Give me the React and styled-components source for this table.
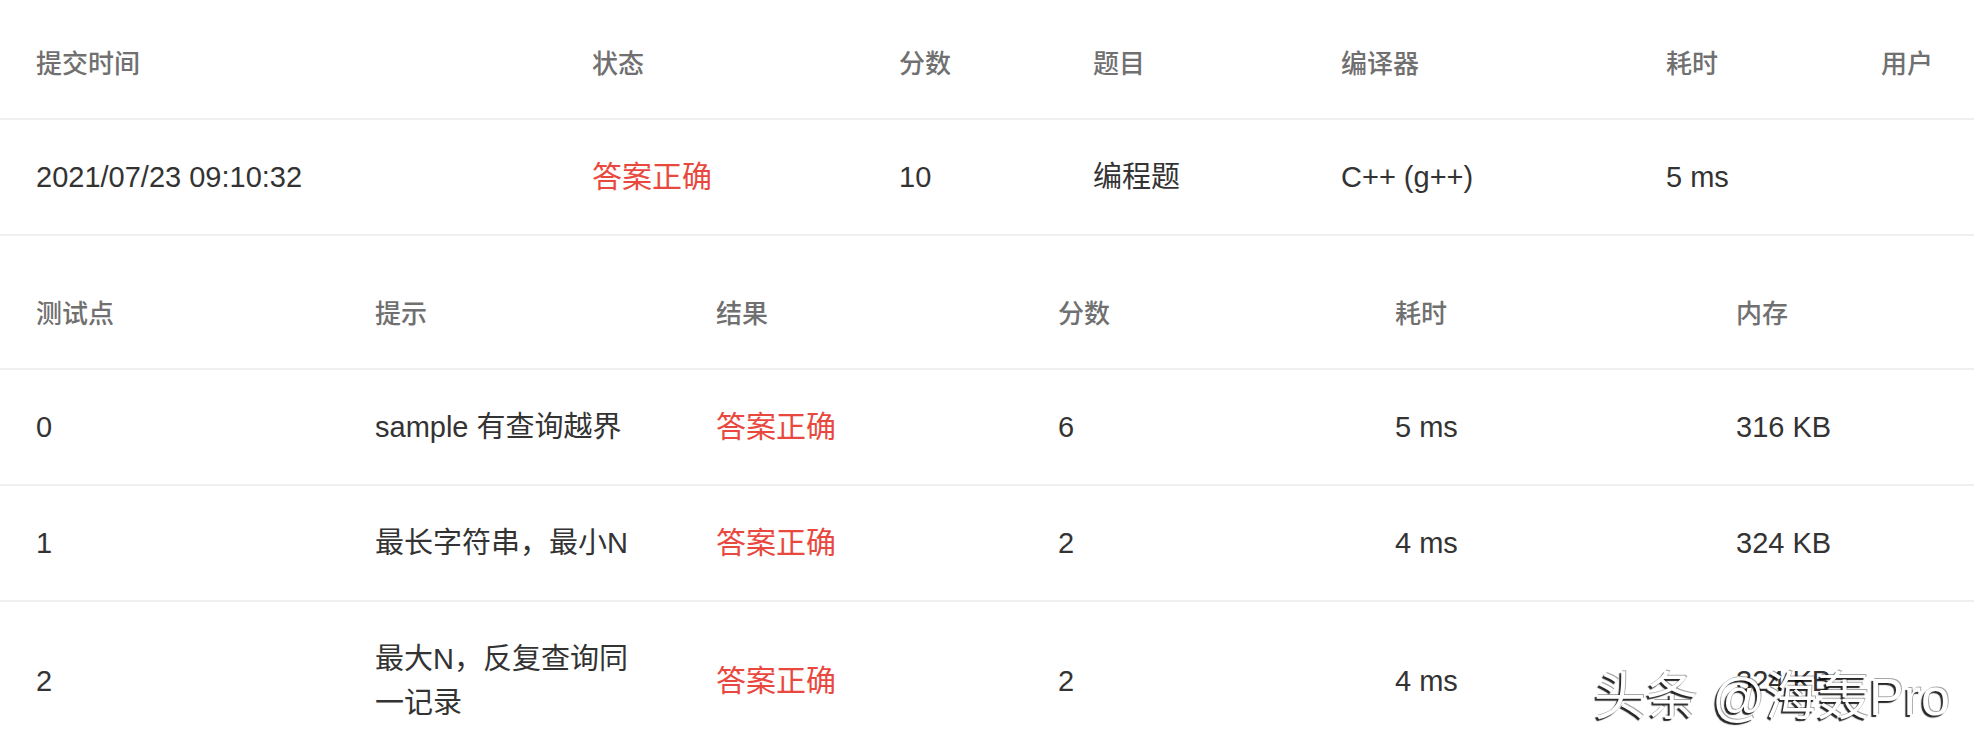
import React from "react"
import styled, { createGlobalStyle } from "styled-components"

const GlobalStyle = createGlobalStyle`
  body {
    margin: 0;
    background: #fff;
    font-family: "Liberation Sans", "Noto Sans CJK SC", sans-serif;
  }
`

const Page = styled.div`
  position: relative;
  padding-top: 10px;
  background: #fff;
`

const Table = styled.div`
  & + & {
    margin-top: 24px;
  }
`

const Row = styled.div`
  display: grid;
  grid-template-columns: ${(p) => p.$cols};
  border-bottom: ${(p) => (p.$last ? "none" : "2px solid #efefef")};
`

const HeadCell = styled.div`
  padding: 32px 36px;
  font-size: 26px;
  line-height: 44px;
  font-weight: 500;
  color: #707070;
  white-space: nowrap;
`

const Cell = styled.div`
  align-self: center;
  padding: 35px 36px;
  font-size: ${(p) => (p.$ok ? "30px" : "29px")};
  line-height: 44px;
  color: ${(p) => (p.$ok ? "#e9483f" : "#333")};
`

const Watermark = styled.div`
  position: absolute;
  right: 24px;
  top: 671px;
  font-size: 52px;
  line-height: 52px;
  color: #fff;
  white-space: nowrap;
  text-shadow: -2px 2px 1px rgba(0, 0, 0, 0.85), 1px -1px 0 rgba(0, 0, 0, 0.35);
`

const submitCols = "556px 307px 194px 248px 325px 215px 1fr"
const caseCols = "339px 341px 342px 337px 341px 1fr"

const submitHead = ["提交时间", "状态", "分数", "题目", "编译器", "耗时", "用户"]
const caseHead = ["测试点", "提示", "结果", "分数", "耗时", "内存"]

const cases = [
  ["0", "sample 有查询越界", "6", "5 ms", "316 KB"],
  ["1", "最长字符串，最小N", "2", "4 ms", "324 KB"],
  ["2", "最大N，反复查询同一记录", "2", "4 ms", "324 KB"],
]

const App = () => (
  <Page>
    <GlobalStyle />
    <Table>
      <Row $cols={submitCols}>
        {submitHead.map((h) => (
          <HeadCell key={h}>{h}</HeadCell>
        ))}
      </Row>
      <Row $cols={submitCols}>
        <Cell>2021/07/23 09:10:32</Cell>
        <Cell $ok>答案正确</Cell>
        <Cell>10</Cell>
        <Cell>编程题</Cell>
        <Cell>C++ (g++)</Cell>
        <Cell>5 ms</Cell>
        <Cell />
      </Row>
    </Table>
    <Table>
      <Row $cols={caseCols}>
        {caseHead.map((h) => (
          <HeadCell key={h}>{h}</HeadCell>
        ))}
      </Row>
      {cases.map(([id, hint, score, time, mem], i) => (
        <Row key={id} $cols={caseCols} $last={i === cases.length - 1}>
          <Cell>{id}</Cell>
          <Cell>{hint}</Cell>
          <Cell $ok>答案正确</Cell>
          <Cell>{score}</Cell>
          <Cell>{time}</Cell>
          <Cell>{mem}</Cell>
        </Row>
      ))}
    </Table>
    <Watermark>头条 @海轰Pro</Watermark>
  </Page>
)

export default App
